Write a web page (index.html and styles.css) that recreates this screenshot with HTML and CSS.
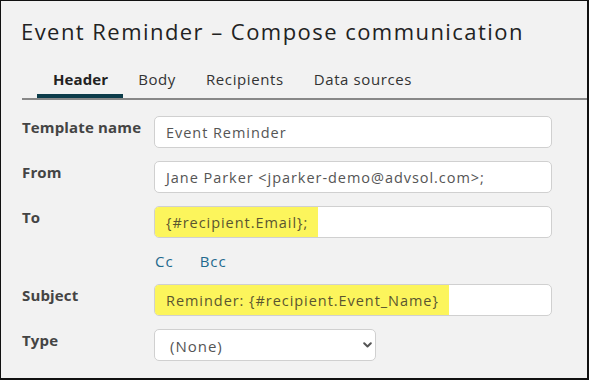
FILE: index.html
```html
<!DOCTYPE html>
<html>
<head>
<meta charset="utf-8">
<link rel="stylesheet" href="styles.css">
</head>
<body>
<div class="frame">
  <h1 class="title">Event Reminder – Compose communication</h1>
  <div class="tabs">
    <div class="tab active">Header</div>
    <div class="tab">Body</div>
    <div class="tab">Recipients</div>
    <div class="tab">Data sources</div>
  </div>
  <div class="form">
    <div class="label">Template name</div>
    <div class="field"><span class="text">Event Reminder</span></div>

    <div class="label">From</div>
    <div class="field"><span class="text">Jane Parker &lt;jparker-demo@advsol.com&gt;;</span></div>

    <div class="label">To</div>
    <div class="field"><span class="text hl">{#recipient.Email};</span></div>

    <div class="label"></div>
    <div class="links"><span class="link">Cc</span><span class="link">Bcc</span></div>

    <div class="label">Subject</div>
    <div class="field"><span class="text hl">Reminder: {#recipient.Event_Name}</span></div>

    <div class="label">Type</div>
    <div class="select-wrap">
      <div class="select">(None)</div>
      <svg class="chev" width="9" height="6" viewBox="0 0 9 6"><path d="M1.2 1.2 L4.5 4.5 L7.8 1.2" fill="none" stroke="#555" stroke-width="2" stroke-linecap="round" stroke-linejoin="round"/></svg>
    </div>
  </div>
</div>
</body>
</html>
```
FILE: styles.css
```css
html, body {
  margin: 0;
  padding: 0;
  background: #f2f2f2;
}
.frame {
  width: 589px;
  height: 380px;
  box-sizing: border-box;
  border: 1px solid #111;
  border-right-width: 2px;
  border-bottom-width: 2px;
  background: #f2f2f2;
  padding: 15px 0 0 20px;
  font-family: "Open Sans", "Liberation Sans", sans-serif;
  overflow: hidden;
}
.title {
  margin: 0;
  font-size: 22px;
  line-height: 30px;
  font-weight: 400;
  color: #222;
  letter-spacing: 1.45px;
}
.tabs {
  display: flex;
  margin: 23px 0 0 1px;
  padding-left: 15px;
  border-bottom: 2px solid #888;
}
.tab {
  padding: 0 15px 5px;
  font-size: 15px;
  line-height: 20px;
  color: #333;
  letter-spacing: 0.6px;
  border-bottom: 4px solid transparent;
}
.tab.active {
  font-weight: 700;
  color: #222;
  letter-spacing: 0.1px;
  padding: 0 15px 5px 16px;
  border-bottom-color: #0c3c4a;
}
.form {
  display: grid;
  grid-template-columns: 132px 398px;
  row-gap: 13px;
  margin: 16px 0 0 1px;
}
.label {
  font-size: 15px;
  line-height: 20px;
  font-weight: 700;
  color: #444;
  letter-spacing: 0.15px;
  padding-top: 1px;
}
.field {
  height: 32px;
  box-sizing: border-box;
  border: 1px solid #d0d0d0;
  border-radius: 5px;
  background: #fff;
  display: flex;
  overflow: hidden;
}
.text {
  display: flex;
  align-items: center;
  padding: 1px 10px 0 11px;
  font-size: 14.5px;
  letter-spacing: 0.95px;
  color: #555;
}
.text.hl {
  background: #fcf55c;
  color: #5a5530;
}
.links {
  display: flex;
  gap: 26px;
  padding-left: 1px;
  font-size: 15px;
  line-height: 20px;
  letter-spacing: 1px;
}
.link {
  color: #1f6a8e;
}
.select-wrap {
  position: relative;
  width: 222px;
  height: 32px;
}
.select {
  height: 32px;
  box-sizing: border-box;
  border: 1px solid #d0d0d0;
  border-radius: 5px;
  background: #fff;
  padding: 1px 0 0 15px;
  display: flex;
  align-items: center;
  font-size: 15px;
  letter-spacing: 1px;
  color: #555;
}
.chev {
  position: absolute;
  right: 4px;
  top: 13px;
}
```
